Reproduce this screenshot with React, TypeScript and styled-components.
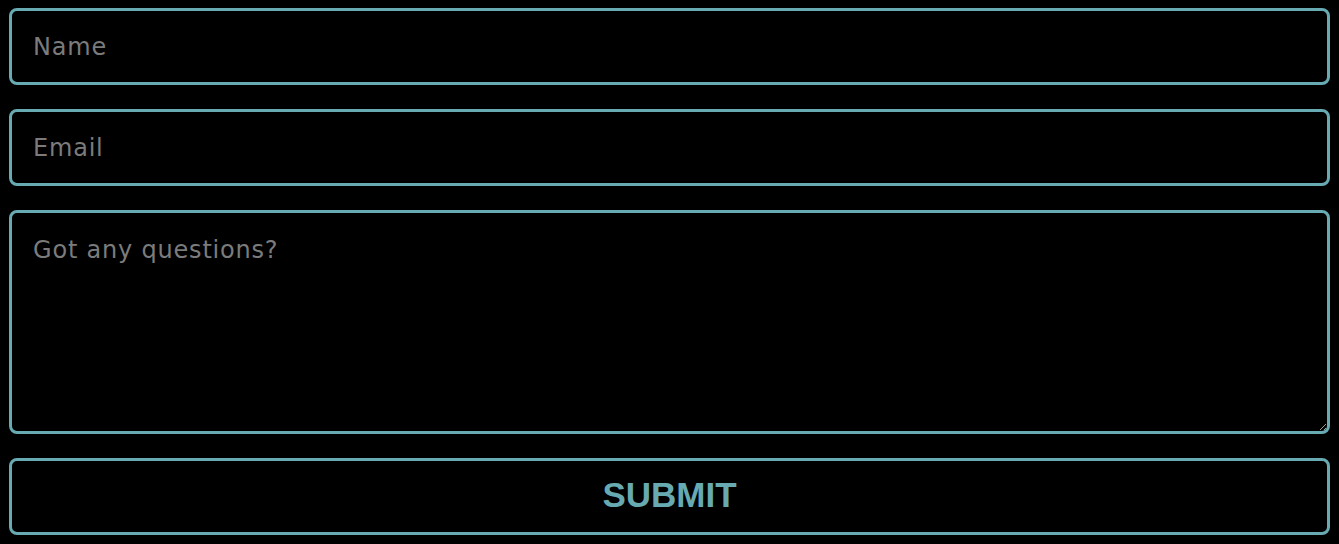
import React from "react";
import styled, { createGlobalStyle } from "styled-components";

const Global = createGlobalStyle`
  html, body { margin: 0; padding: 0; background: #000; }
  body { padding: 8px 9px; box-sizing: border-box; }
  * { box-sizing: border-box; }
`;

const Form = styled.form`
  display: flex;
  flex-direction: column;
  gap: 24px;
  width: 100%;
`;

const fieldBase = `
  width: 100%;
  background: #000;
  border: 3px solid #68aab2;
  border-radius: 8px;
  color: #ddd;
  font-family: "DejaVu Sans", "Open Sans", sans-serif;
  font-size: 24px;
  letter-spacing: 0.8px;
  outline: none;
  &::placeholder { color: #7b7b7b; }
`;

const Input = styled.input`
  ${fieldBase}
  height: 77px;
  padding: 0 21px;
`;

const TextArea = styled.textarea`
  ${fieldBase}
  height: 224px;
  padding: 23px 21px;
  resize: vertical;
  display: block;
`;

const Submit = styled.button`
  height: 77px;
  width: 100%;
  background: #000;
  border: 3px solid #68aab2;
  border-radius: 8px;
  color: #68aab2;
  font-family: "Liberation Sans", Arial, sans-serif;
  font-weight: 700;
  font-size: 35px;
  padding: 0 0 3px;
  cursor: pointer;
`;

export default function App() {
  return (
    <>
      <Global />
      <Form onSubmit={(e) => e.preventDefault()}>
        <Input placeholder="Name" />
        <Input placeholder="Email" />
        <TextArea placeholder="Got any questions?" />
        <Submit type="submit">SUBMIT</Submit>
      </Form>
    </>
  );
}
